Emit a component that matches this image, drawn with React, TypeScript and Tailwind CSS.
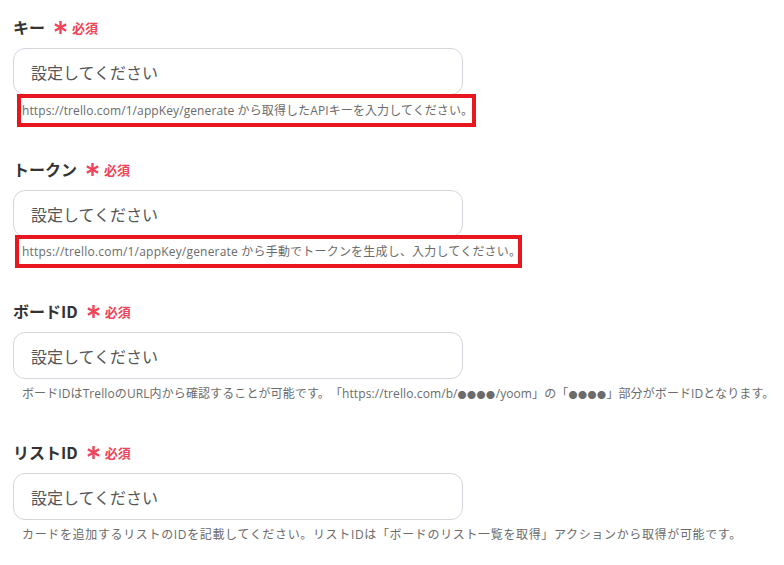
import React from "react";

const font = { fontFamily: '"Open Sans", "Noto Sans CJK JP", sans-serif' };
const jp = { fontFamily: '"Noto Sans CJK JP", sans-serif' };

function Asterisk() {
  return (
    <svg width="13" height="13" viewBox="0 0 12 12" className="ml-[9px]">
      <g stroke="#f0435a" strokeWidth="2.2" strokeLinecap="butt">
        <line x1="6" y1="0" x2="6" y2="12" />
        <line x1="0.8" y1="3" x2="11.2" y2="9" />
        <line x1="0.8" y1="9" x2="11.2" y2="3" />
      </g>
    </svg>
  );
}

function Label({ text }: { text: string }) {
  return (
    <div className="h-[22px] flex items-center">
      <span className="text-[16px] font-bold text-[#333333] leading-none" style={jp}>{text}</span>
      <Asterisk />
      <span className="ml-[5px] text-[13px] font-bold text-[#f0435a] leading-none" style={jp}>必須</span>
    </div>
  );
}

function Input() {
  return (
    <div className="mt-[10px] h-[47px] w-[450px] rounded-[12px] border border-[#d3d6dc] bg-white flex items-center pl-[17px]">
      <span className="text-[16px] text-[#555555]" style={jp}>設定してください</span>
    </div>
  );
}

const Dots = () => <span className="text-[9px] tracking-[0.5px]">●●●●</span>;

export default function App() {
  return (
    <div className="w-[784px] h-[565px] bg-white pl-[13px] pt-[16px] overflow-hidden [text-spacing-trim:space-all]" style={font}>
      <div className="h-[142px]">
        <Label text="キー" />
        <Input />
        <div className="mt-[-1px] ml-[4px] w-[459px] h-[33px] border-4 border-[#e8161e] flex items-center pl-[1px]">
          <span className="text-[12px] text-[#6b6b6b] whitespace-nowrap tracking-[0.1px]">
            https://trello.com/1/appKey/generate から取得したAPIキーを入力してください。
          </span>
        </div>
      </div>
      <div className="h-[142px]">
        <Label text="トークン" />
        <Input />
        <div className="mt-[-2px] ml-[2px] w-[507px] h-[33px] border-4 border-[#e8161e] flex items-center pl-[3px]">
          <span className="text-[12px] text-[#6b6b6b] whitespace-nowrap tracking-[0.2px]">
            https://trello.com/1/appKey/generate から手動でトークンを生成し、入力してください。
          </span>
        </div>
      </div>
      <div className="h-[141px]">
        <Label text="ボードID" />
        <Input />
        <div className="mt-[6px] ml-[9px] h-[18px] flex items-center">
          <span className="text-[12px] text-[#6b6b6b] whitespace-nowrap tracking-[0.1px]">
            ボードIDはTrelloのURL内から確認することが可能です。「https://trello.com/b/<Dots />/yoom」の「<Dots />」部分がボードIDとなります。
          </span>
        </div>
      </div>
      <div className="h-[142px]">
        <Label text="リストID" />
        <Input />
        <div className="mt-[6px] ml-[9px] h-[18px] flex items-center">
          <span className="text-[12px] text-[#6b6b6b] whitespace-nowrap tracking-[0.65px]">
            カードを追加するリストのIDを記載してください。リストIDは「ボードのリスト一覧を取得」アクションから取得が可能です。
          </span>
        </div>
      </div>
    </div>
  );
}
